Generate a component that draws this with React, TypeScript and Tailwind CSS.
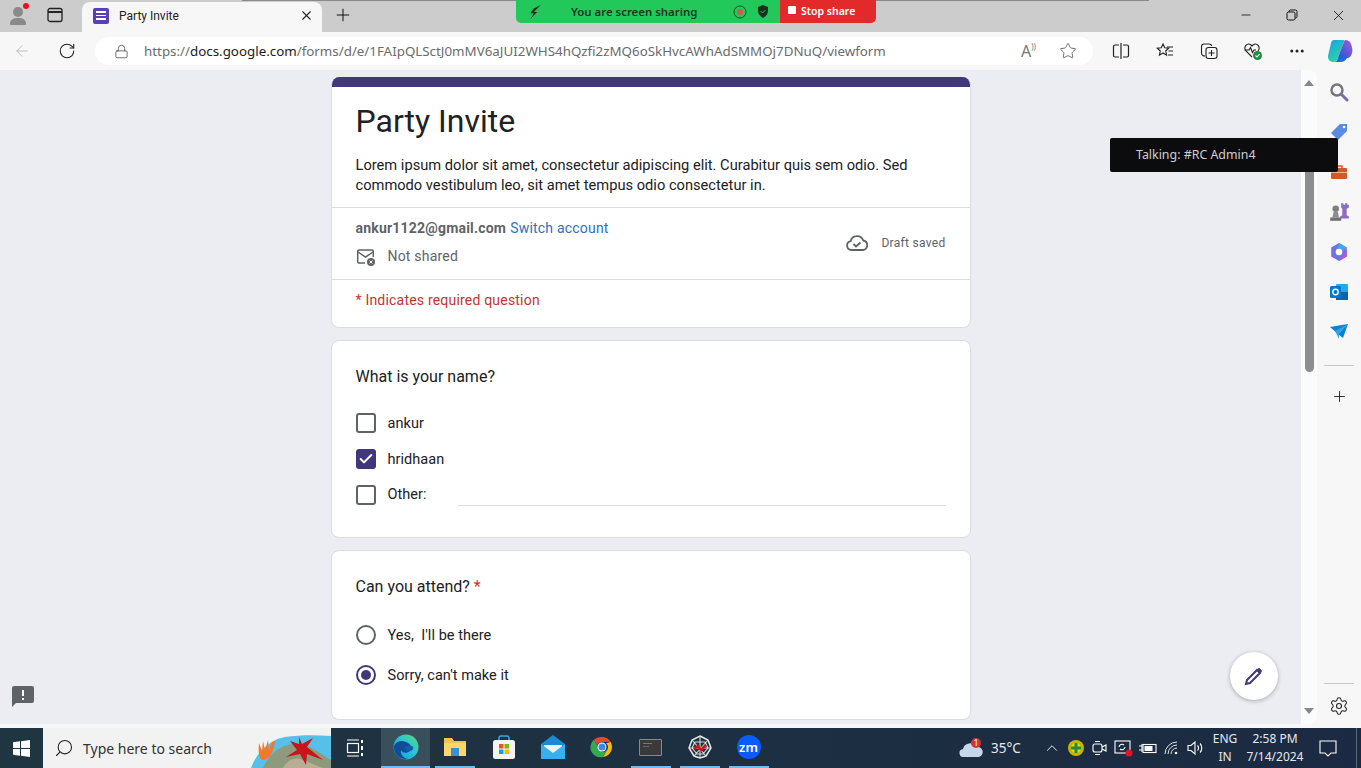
import React from "react";
import {
  ArrowLeft,
  Check,
  ChevronUp,
  Ellipsis,
  Lock,
  Minus,
  Plus,
  RotateCw,
  Search,
  Settings,
  Star,
  X,
} from "lucide-react";

const URL_PATH = "/forms/d/e/1FAIpQLSctJ0mMV6aJUI2WHS4hQzfi2zMQ6oSkHvcAWhAdSMMOj7DNuQ/viewform";

const Checkbox = ({ checked }: { checked?: boolean }) =>
  checked ? (
    <div className="w-[20px] h-[20px] rounded-[3px] bg-[#43377c] flex items-center justify-center">
      <Check size={16} strokeWidth={3} className="text-white" />
    </div>
  ) : (
    <div className="w-[20px] h-[20px] rounded-[3px] border-2 border-[#5f6368]" />
  );

const Radio = ({ checked }: { checked?: boolean }) => (
  <div
    className={`w-[20px] h-[20px] rounded-full border-2 flex items-center justify-center ${
      checked ? "border-[#43377c]" : "border-[#5f6368]"
    }`}
  >
    {checked && <div className="w-[10px] h-[10px] rounded-full bg-[#43377c]" />}
  </div>
);

const CheckRow = ({ label, checked }: { label: string; checked?: boolean }) => (
  <div className="h-[36px] flex items-center gap-[12px]">
    <Checkbox checked={checked} />
    <span className="pt-[1px] text-[14.5px] tracking-[0.05px] text-[#202124]">{label}</span>
  </div>
);

const RadioRow = ({ label, checked }: { label: string; checked?: boolean }) => (
  <div className="h-[40px] flex items-center gap-[12px]">
    <Radio checked={checked} />
    <span className="pt-[1px] text-[14.5px] tracking-[0.05px] text-[#202124] whitespace-pre">{label}</span>
  </div>
);

const SideCell = ({ children }: { children: React.ReactNode }) => (
  <div className="h-[40px] flex items-center justify-center">{children}</div>
);

const TaskItem = ({
  children,
  running,
  active,
}: {
  children: React.ReactNode;
  running?: boolean;
  active?: boolean;
}) => (
  <div className={`w-[49px] h-full flex flex-col items-center ${active ? "bg-[#39505c]" : ""}`}>
    <div className="flex-1 flex items-center justify-center">{children}</div>
    <div className={`h-[2px] ${active ? "w-full" : "w-[40px]"} ${running ? "bg-[#76b9ed]" : ""}`} />
  </div>
);

const TrayCell = ({ children }: { children: React.ReactNode }) => (
  <div className="w-[24px] flex items-center justify-center">{children}</div>
);

const TabStrip = () => (
  <div className="h-[32px] shrink-0 bg-[#cccccc] flex items-end">
    <div className="w-[36px] h-full flex items-center justify-center pl-[1px] pb-[2px]">
      <svg width="28" height="28" viewBox="0 0 28 28">
        <circle cx="13" cy="11" r="5" fill="#8a8a8a" />
        <path d="M5 23c0-5 4-6 8-6s8 1 8 6c0 1-1 1-2 1H7c-1 0-2 0-2-1z" fill="#8a8a8a" />
        <circle cx="21" cy="5" r="3" fill="#e81123" />
      </svg>
    </div>
    <div className="w-[38px] h-full flex items-center justify-center pb-[2px]">
      <svg width="16" height="16" viewBox="0 0 16 16" fill="none">
        <rect x="1" y="1.5" width="14" height="13" rx="2" stroke="#222" strokeWidth="1.3" />
        <path d="M1 5h14" stroke="#222" strokeWidth="2" />
      </svg>
    </div>
    <div className="ml-[8px] w-[240px] h-[30px] bg-[#f7f7f7] rounded-t-[8px] flex items-center pl-[11px] pb-[3px]">
      <div className="w-[16px] h-[16px] rounded-[2px] bg-[#5b3fb5] flex flex-col justify-center gap-[2px] pl-[3px]">
        <div className="w-[10px] h-[1.5px] bg-white" />
        <div className="w-[10px] h-[1.5px] bg-white" />
        <div className="w-[10px] h-[1.5px] bg-white" />
      </div>
      <span className="ml-[10px] text-[12px] text-[#222]">Party Invite</span>
      <X size={15} strokeWidth={1.7} className="ml-auto mr-[8px] text-[#222]" />
    </div>
    <div className="ml-[11px] h-full flex items-center pb-[2px]">
      <Plus size={20} strokeWidth={1.2} className="text-[#111]" />
    </div>
    <div className="ml-auto h-full flex items-center text-[#111] pb-[2px]">
      <div className="w-[46px] flex justify-center">
        <Minus size={14} strokeWidth={1.4} />
      </div>
      <div className="w-[46px] flex justify-center">
        <svg width="12" height="12" viewBox="0 0 12 12" fill="none" stroke="#111">
          <rect x="1" y="3" width="8" height="8" rx="1.5" />
          <path d="M3 3V2.5A1.5 1.5 0 0 1 4.500 1H9.500A1.500 1.500 0 0 1 11 2.500V7.500A1.500 1.500 0 0 1 9 9" />
        </svg>
      </div>
      <div className="w-[46px] flex justify-center">
        <X size={17} strokeWidth={1.2} />
      </div>
    </div>
  </div>
);

const Toolbar = () => (
  <div className="h-[38px] shrink-0 bg-[#f7f7f7] flex items-center">
    <div className="w-[44px] flex justify-center">
      <ArrowLeft size={18} strokeWidth={1.2} className="text-[#b8b8b8]" />
    </div>
    <div className="w-[46px] flex justify-center">
      <RotateCw size={18} strokeWidth={1.4} className="text-[#222]" />
    </div>
    <div className="ml-[5px] w-[998px] h-[28px] rounded-full bg-white flex items-center pl-[19px] pr-[16px] font-['Noto_Sans',sans-serif] text-[13.35px] text-[#6b6b6b]">
      <Lock size={15} strokeWidth={1.2} className="text-[#444] mr-[15px]" />
      <span>https://</span>
      <span className="text-[#1c1c1c]">docs.google.com</span>
      <span>{URL_PATH}</span>
      <span className="ml-auto text-[16px] leading-none text-[#777] mr-[23px]">
        A<span className="text-[8px] align-top">))</span>
      </span>
      <Star size={18} strokeWidth={1.1} className="text-[#555]" />
    </div>
    <div className="ml-[6px] w-[44px] flex justify-center">
      <svg width="18" height="18" viewBox="0 0 18 18" fill="none" stroke="#222" strokeWidth="1.2">
        <path d="M7 3H3a1.500 1.500 0 0 0-1.500 1.500v9A1.500 1.500 0 0 0 3 15h4M11 3h4a1.500 1.500 0 0 1 1.500 1.500v9A1.500 1.500 0 0 1 15 15h-4M9 1v16" />
      </svg>
    </div>
    <div className="w-[44px] flex justify-center">
      <svg width="18" height="18" viewBox="0 0 18 18" fill="none" stroke="#222" strokeWidth="1.1">
        <path d="M7 2l1.700 3.800 4 .4-3 2.800.9 4.200L7 11l-3.600 2.200.9-4.200-3-2.800 4-.4z" />
        <path d="M11 5h6M12.500 9H17M12 13h5" />
      </svg>
    </div>
    <div className="w-[44px] flex justify-center">
      <svg width="18" height="18" viewBox="0 0 18 18" fill="none" stroke="#222" strokeWidth="1.1">
        <path d="M5 14c-2 0-3.500-1-3.500-3V4.500C1.500 3 2.500 2 4 2h5c1.500 0 2.500.8 2.800 2" />
        <rect x="6" y="5.500" width="11" height="11" rx="2.500" />
        <path d="M11.500 8v6M8.500 11h6" />
      </svg>
    </div>
    <div className="w-[44px] flex justify-center">
      <svg width="20" height="20" viewBox="0 0 20 20" fill="none">
        <path d="M9 16L3 10C0 6 4 1 8 4l1 1 1-1c4-3 8 2 5 6" stroke="#222" strokeWidth="1.100" />
        <path d="M1.500 9H6l1.500-2.500 2 5L11 9h2" stroke="#222" strokeWidth="1.100" />
        <circle cx="14.500" cy="14.500" r="4.500" fill="#1e8e3e" />
        <path d="M12.500 14.500l1.500 1.500 2.500-2.800" stroke="#fff" strokeWidth="1.100" />
      </svg>
    </div>
    <div className="w-[44px] flex justify-center">
      <Ellipsis size={18} strokeWidth={2} className="text-[#222]" />
    </div>
    <div className="w-[42px] flex justify-center">
      <svg width="26" height="24" viewBox="0 0 26 24">
        <defs>
          <linearGradient id="cpA" x1="0" y1="0" x2="0.6" y2="1">
            <stop offset="0" stopColor="#1a9fe8" />
            <stop offset="1" stopColor="#2fd6a0" />
          </linearGradient>
          <linearGradient id="cpB" x1="0" y1="1" x2="1" y2="0">
            <stop offset="0" stopColor="#1a58d8" />
            <stop offset="1" stopColor="#a85ad8" />
          </linearGradient>
        </defs>
        <path d="M7 1h9c1 0 1.500.5 1 2l-4 10-2 6c-1 3-3 4-5 4-3 0-5.500-3-5-6L4 4c.5-2 1.500-3 3-3z" fill="url(#cpA)" />
        <path d="M18 1c3 0 5 1 6 4 1 3 2 6 1 9-1 4-3 5-5 5H11l2-6 4-10c.3-1 .5-2 1-2z" fill="url(#cpB)" />
        <path d="M11 19h9c-2 3-4 4-7 4H6c3 0 4-1 5-4z" fill="#1a6ae0" />
      </svg>
    </div>
  </div>
);

const HeaderCard = () => (
  <div className="bg-white rounded-lg border border-[#dadce0] border-t-0 overflow-hidden">
    <div className="h-[10px] bg-[#43377c]" />
    <div className="h-[121px] px-[24px] pt-[12px] border-b border-[#dadce0]">
      <h1 className="text-[32px] leading-[44px] text-[#202124]">Party Invite</h1>
      <p className="mt-[12px] text-[14.667px] leading-[20px] text-[#202124] w-[580px]">
        Lorem ipsum dolor sit amet, consectetur adipiscing elit. Curabitur quis sem odio. Sed commodo vestibulum leo,
        sit amet tempus odio consectetur in.
      </p>
    </div>
    <div className="h-[72px] px-[24px] flex items-start justify-between border-b border-[#dadce0]">
      <div>
        <div className="mt-[10px] text-[14px] leading-[20px] tracking-[0.2px]">
          <span className="font-bold text-[#5f6368]">ankur1122@gmail.com</span>
          <span className="ml-[4px] text-[#2f6fc4]">Switch account</span>
        </div>
        <div className="mt-[8px] flex items-center gap-[12px]">
          <svg width="20" height="20" viewBox="0 0 20 20" fill="none" className="shrink-0">
            <path d="M9 16H3a1.300 1.300 0 0 1-1.300-1.300V4.300A1.300 1.300 0 0 1 3 3h13a1.300 1.300 0 0 1 1.300 1.300V10" stroke="#5f6368" strokeWidth="1.500" />
            <path d="M2 5l7.500 5L17 5" stroke="#5f6368" strokeWidth="1.500" />
            <circle cx="15" cy="15" r="4" fill="#5f6368" />
            <path d="M13.500 13.500l3 3M16.500 13.500l-3 3" stroke="#fff" />
          </svg>
          <span className="text-[14px] tracking-[0.2px] text-[#5f6368]">Not shared</span>
        </div>
      </div>
      <div className="mt-[23px] flex items-center gap-[12px]">
        <svg width="24" height="24" viewBox="0 0 24 24" fill="none" stroke="#5f6368" strokeWidth="1.800">
          <path d="M6.500 19a4.500 4.500 0 0 1-.8-8.900A6.500 6.500 0 0 1 18.200 9.500 4.800 4.800 0 0 1 18 19z" />
          <path d="M8.500 13l2.500 2.500 4.500-4" />
        </svg>
        <span className="text-[12px] tracking-[0.3px] text-[#5f6368]">Draft saved</span>
      </div>
    </div>
    <div className="h-[47px] px-[24px] pt-[10px] text-[14px] tracking-[0.2px] text-[#c5342c]">* Indicates required question</div>
  </div>
);

const NameCard = () => (
  <div className="mt-[12px] h-[198px] bg-white rounded-lg border border-[#dadce0] px-[24px] pt-[25px]">
    <div className="h-[22px] text-[16px] leading-[22px] text-[#202124]">What is your name?</div>
    <div className="mt-[17px]">
      <CheckRow label="ankur" />
      <CheckRow label="hridhaan" checked />
      <div className="h-[36px] flex items-center">
        <Checkbox />
        <span className="ml-[12px] text-[14.5px] tracking-[0.05px] text-[#202124]">Other:</span>
        <div className="ml-[31px] flex-1 h-[22px] border-b border-[#dadce0]" />
      </div>
    </div>
  </div>
);

const AttendCard = () => (
  <div className="mt-[12px] h-[170px] bg-white rounded-lg border border-[#dadce0] px-[24px] pt-[25px] shrink-0">
    <div className="h-[22px] text-[16px] leading-[22px] text-[#202124]">
      Can you attend? <span className="text-[#d93025]">*</span>
    </div>
    <div className="mt-[17px]">
      <RadioRow label="Yes,  I'll be there" />
      <RadioRow label="Sorry, can't make it" checked />
    </div>
  </div>
);

const Sidebar = () => (
  <div className="w-[44px] shrink-0 bg-[#f7f7f7] flex flex-col pt-[2px]">
    <SideCell>
      <svg width="20" height="20" viewBox="0 0 20 20" fill="none">
        <circle cx="8" cy="8" r="5.500" stroke="#74747a" strokeWidth="2.400" />
        <path d="M12.500 12.500L18 18" stroke="#7c6bb0" strokeWidth="3" strokeLinecap="round" />
      </svg>
    </SideCell>
    <SideCell>
      <svg width="20" height="20" viewBox="0 0 20 20">
        <path d="M11 2h7v7l-9 9-7-7z" fill="#5a8be0" />
        <circle cx="15" cy="5" r="1.300" fill="#fff" />
      </svg>
    </SideCell>
    <SideCell>
      <svg width="18" height="18" viewBox="0 0 18 18">
        <rect x="1" y="5" width="16" height="11" rx="1" fill="#d8552b" />
        <path d="M6 5V3h6v2" fill="none" stroke="#d8552b" strokeWidth="1.500" />
        <rect x="1" y="9" width="16" height="1" fill="#f2b79e" />
      </svg>
    </SideCell>
    <SideCell>
      <svg width="22" height="22" viewBox="0 0 20 20">
        <circle cx="7" cy="7" r="3" fill="#7f7f7f" />
        <path d="M5 10h4l1 5H4z" fill="#8d8d8d" />
        <rect x="2" y="15" width="10" height="3" fill="#6f6f6f" />
        <path d="M12 2h2v1.500h1.500V2h2v1.500H19V6l-2 1v6l2 1v2h-8v-2l2-1V7l-1-1z" fill="#8b6fbe" />
      </svg>
    </SideCell>
    <SideCell>
      <svg width="20" height="20" viewBox="0 0 18 18">
        <path d="M9 1l7 4v8l-7 4-7-4V5z" fill="#6f72e0" />
        <path d="M9 1l7 4-3 3c-2-2-5-2-6 0z" fill="#4aa3e8" />
        <path d="M16 7v6l-7 4 2-4c2 0 3-2 3-4z" fill="#b05ad8" />
        <circle cx="9" cy="9" r="3" fill="#fff" />
      </svg>
    </SideCell>
    <SideCell>
      <svg width="18" height="18" viewBox="0 0 18 18">
        <rect x="6" y="1" width="12" height="15" rx="1" fill="#28a8ea" />
        <rect x="6" y="9" width="12" height="8" fill="#0a64ad" />
        <rect x="0" y="3" width="11" height="12" rx="1.500" fill="#0078d4" />
        <circle cx="5.500" cy="9" r="2.700" fill="none" stroke="#fff" strokeWidth="1.400" />
      </svg>
    </SideCell>
    <SideCell>
      <svg width="18" height="16" viewBox="0 0 18 16">
        <path d="M0 3l18-3-5 14-5-4z" fill="#0f7fd1" />
        <path d="M5 7l13-7-9 10 0 5z" fill="#28a8ea" />
      </svg>
    </SideCell>
    <div className="mt-[13px] mx-[7px] h-px bg-[#c8c8c8]" />
    <div className="mt-[10px]">
      <SideCell>
        <Plus size={17} strokeWidth={1.200} className="text-[#111]" />
      </SideCell>
    </div>
    <div className="mt-auto mx-[7px] h-px bg-[#c8c8c8]" />
    <div className="h-[44px] flex items-center justify-center">
      <Settings size={20} strokeWidth={1.300} className="text-[#222]" />
    </div>
  </div>
);

const Scrollbar = () => (
  <div className="w-[16px] shrink-0 bg-[#fbfbfb] rounded-tr-[8px] rounded-br-[8px] flex flex-col items-center">
    <div className="mt-[10px] w-0 h-0 border-x-[5px] border-x-transparent border-b-[6px] border-b-[#888]" />
    <div className="mt-[60px] w-[9px] h-[226px] rounded-b-full bg-[#8d8d8d]" />
    <div className="mt-auto mb-[10px] w-0 h-0 border-x-[5px] border-x-transparent border-t-[6px] border-t-[#888]" />
  </div>
);

const Taskbar = () => (
  <div className="h-[40px] shrink-0 bg-gradient-to-r from-[#1f3541] to-[#1b2a42] flex items-stretch font-['Noto_Sans',sans-serif] text-white">
    <div className="w-[43px] flex items-center justify-center">
      <svg width="17" height="17" viewBox="0 0 17 17" fill="#fff">
        <path d="M0 2.300l7-1v6.700H0zM8 1.200l9-1.200v8H8zM0 9h7v6.700l-7-1zM8 9h9v8l-9-1.200z" />
      </svg>
    </div>
    <div className="w-[288px] bg-[#f2f2f2] flex items-center overflow-hidden">
      <Search size={20} strokeWidth={1.300} className="ml-[11px] text-[#222] -scale-x-100" />
      <span className="ml-[9px] text-[14px] text-[#333]">Type here to search</span>
      <svg width="82" height="40" viewBox="0 0 82 40" className="ml-auto shrink-0">
        <path d="M2 40C8 24 20 12 36 9c14-2 30-2 46-1v32z" fill="#57c0e8" />
        <path d="M14 40c6-14 18-24 32-24 16 0 28 12 36 16v8z" fill="#8d9a7c" />
        <path d="M34 40c4-8 12-12 20-8 8 3 14 6 20 8z" fill="#b9ad94" />
        <path d="M10 15l3 8 1-10 2 9 3-10 1 10 3-8 3-1c-1 9-5 19-12 19-4 0-5-8-4-17z" fill="#f07a2a" />
        <path d="M50 9l3 7 11-6-6 9 16 13-16-6-1 11-6-11-14 3 11-7-7-9 9 3z" fill="#c8141a" />
      </svg>
    </div>
    <div className="w-[47px] flex items-center justify-center">
      <svg width="18" height="18" viewBox="0 0 18 18" fill="none" stroke="#fff" strokeWidth="1.200">
        <path d="M1 1h12M1 17h12" />
        <rect x="1.500" y="4.500" width="11" height="9" />
        <path d="M16 1v3M16 7v4M16 14v3" strokeWidth="2" />
      </svg>
    </div>
    <div className="ml-[3px] flex items-stretch">
      <TaskItem active running>
        <svg width="26" height="26" viewBox="0 0 26 26">
          <defs>
            <linearGradient id="edgeA" x1="0" y1="1" x2="1" y2="0">
              <stop offset="0" stopColor="#1b8fe0" />
              <stop offset="0.55" stopColor="#2bc3d8" />
              <stop offset="1" stopColor="#5fdc6a" />
            </linearGradient>
          </defs>
          <circle cx="13" cy="13" r="12.500" fill="url(#edgeA)" />
          <path d="M1 12c2-5 8-6 12-4 5 2 7 6 4 9-3 3-8 2-9-1-1 4 2 8 7 9-8 1-15-5-14-13z" fill="#0c4f96" />
          <path d="M12 14c1-3 6-3 8-1 1 2-1 4-4 4-2 0-4-1-4-3z" fill="#0f5fae" />
        </svg>
      </TaskItem>
      <TaskItem running>
        <svg width="24" height="22" viewBox="0 0 24 22">
          <path d="M1 2h8l2 3h12v15H1z" fill="#f4c542" />
          <rect x="1" y="7" width="22" height="13" fill="#fbd66b" />
          <rect x="8" y="12" width="8" height="8" fill="#3a8fd8" />
        </svg>
      </TaskItem>
      <TaskItem>
        <svg width="24" height="26" viewBox="0 0 24 26">
          <path d="M7 7V4a2 2 0 0 1 2-2h6a2 2 0 0 1 2 2v3" fill="none" stroke="#35a8e0" strokeWidth="1.500" />
          <rect x="1" y="6" width="22" height="19" rx="2.500" fill="#f4f4f4" />
          <rect x="7" y="10" width="4.500" height="4.500" fill="#f25022" />
          <rect x="12.500" y="10" width="4.500" height="4.500" fill="#7fba00" />
          <rect x="7" y="15.500" width="4.500" height="4.500" fill="#00a4ef" />
          <rect x="12.500" y="15.500" width="4.500" height="4.500" fill="#ffb900" />
        </svg>
      </TaskItem>
      <TaskItem>
        <svg width="26" height="24" viewBox="0 0 26 24">
          <path d="M1 9L13 0l12 9v15H1z" fill="#1b8ad6" />
          <path d="M4 10h18v6l-9 5-9-5z" fill="#e8f4fc" />
          <path d="M1 9l12 9 12-9v15H1z" fill="#35b0f0" />
        </svg>
      </TaskItem>
      <TaskItem>
        <svg width="24" height="24" viewBox="0 0 48 48">
          <path d="M24 4a20 20 0 0 1 17.300 10H24a10 10 0 0 0-9.600 7.200L7.700 9.600A20 20 0 0 1 24 4z" fill="#ea4335" />
          <path d="M41.300 14A20 20 0 0 1 26 44l8.600-15A10 10 0 0 0 32 16.500z" fill="#fbbc05" />
          <path d="M26 44A20 20 0 0 1 7.700 9.600l8.600 15A10 10 0 0 0 34.600 29z" fill="#34a853" />
          <circle cx="24" cy="24" r="9" fill="#fff" />
          <circle cx="24" cy="24" r="7" fill="#4285f4" />
        </svg>
      </TaskItem>
      <TaskItem running>
        <div className="w-[23px] h-[17px] bg-[#3a3a3a] border border-[#8a8a8a] rounded-[1px] p-[3px]">
          <div className="w-[9px] h-[1px] bg-[#777]" />
          <div className="mt-[2px] w-[6px] h-[1px] bg-[#666]" />
        </div>
      </TaskItem>
      <TaskItem running>
        <svg width="24" height="24" viewBox="0 0 24 24" fill="none">
          <path d="M12 1L20 5l3 8-5 8-6 2-6-2-5-8 3-8z" fill="#1f3541" stroke="#e8e8e8" strokeWidth="1.500" />
          <path d="M12 1v22M4 5l14 16M20 5L6 21M1 13h22M7 7h10l3 6-5 6H9l-5-6z" stroke="#d8d8d8" strokeWidth="1.100" />
          <path d="M6 14l4-3 3 4 5-5" stroke="#d0121c" strokeWidth="2.500" />
        </svg>
      </TaskItem>
      <TaskItem running>
        <div className="w-[24px] h-[24px] rounded-full bg-[#0b5cff] flex items-center justify-center text-[13px] font-semibold leading-none">
          zm
        </div>
      </TaskItem>
    </div>
    <div className="flex-1" />
    <div className="w-[83px] flex items-center pl-[2px]">
      <svg width="24" height="22" viewBox="0 0 24 22" className="shrink-0">
        <path d="M5 20a4 4 0 0 1-1-8 7 7 0 0 1 13-2 5 5 0 0 1 3 10z" fill="#c7d7ea" />
        <circle cx="17" cy="6" r="5" fill="#d13438" />
        <text x="17" y="9" textAnchor="middle" fontSize="8" fill="#fff">1</text>
      </svg>
      <span className="ml-[8px] text-[13.5px] text-[#e6e9ec]">35°C</span>
    </div>
    <div className="flex items-stretch">
      <TrayCell>
        <ChevronUp size={18} strokeWidth={1.200} />
      </TrayCell>
      <TrayCell>
        <svg width="16" height="16" viewBox="0 0 16 16">
          <circle cx="8" cy="8" r="8" fill="#c9b400" />
          <circle cx="8" cy="8" r="5" fill="#e8d21d" />
          <path d="M6.500 3h3v3.500H13v3H9.500V13h-3V9.500H3v-3h3.500z" fill="#1e8e3e" />
        </svg>
      </TrayCell>
      <TrayCell>
        <svg width="16" height="18" viewBox="0 0 16 18" fill="none" stroke="#fff" strokeWidth="1.100">
          <rect x="1" y="5" width="9" height="8" rx="2" />
          <path d="M10 8l4-2v6l-4-2M3 2.500h5M3 15.500h5" />
        </svg>
      </TrayCell>
      <TrayCell>
        <svg width="20" height="20" viewBox="0 0 20 20" fill="none" stroke="#fff" strokeWidth="1.100">
          <rect x="1" y="3" width="15" height="12" />
          <path d="M5 9a3 3 0 0 1 5-2M11 9a3 3 0 0 1-5 2" />
          <circle cx="15" cy="15" r="3.500" fill="#e81123" stroke="none" />
        </svg>
      </TrayCell>
      <TrayCell>
        <svg width="18" height="12" viewBox="0 0 18 12" fill="none" stroke="#fff" strokeWidth="1.100">
          <rect x="4" y="2.500" width="13" height="8" />
          <rect x="5.500" y="4" width="8" height="5" fill="#fff" stroke="none" />
          <path d="M0 4h3M0 8h3M3 2v8" />
        </svg>
      </TrayCell>
      <TrayCell>
        <svg width="16" height="14" viewBox="0 0 16 14" fill="none" stroke="#dfe3e6" strokeWidth="1">
          <path d="M1 13A12 12 0 0 1 13 1M4 13a9 9 0 0 1 9-9M7 13a6 6 0 0 1 6-6" />
          <circle cx="12" cy="12" r="1.300" fill="#fff" stroke="none" />
        </svg>
      </TrayCell>
      <TrayCell>
        <svg width="18" height="16" viewBox="0 0 18 16" fill="none" stroke="#fff" strokeWidth="1.100">
          <path d="M1 5.500h3L8 2v12l-4-3.500H1z" />
          <path d="M10.500 5.500a3.500 3.500 0 0 1 0 5M13 3.500a6.500 6.500 0 0 1 0 9" />
        </svg>
      </TrayCell>
    </div>
    <div className="ml-[2px] w-[30px] flex flex-col items-center justify-center text-[12px] leading-[18px] text-[#e6e9ec]">
      <span>ENG</span>
      <span>IN</span>
    </div>
    <div className="ml-[5px] w-[60px] flex flex-col items-center justify-center text-[12px] leading-[18px] text-[#e6e9ec] whitespace-nowrap">
      <span>2:58 PM</span>
      <span>7/14/2024</span>
    </div>
    <div className="w-[46px] flex items-center justify-center">
      <svg width="18" height="17" viewBox="0 0 18 17" fill="none" stroke="#fff" strokeWidth="1.100">
        <path d="M1 1h16v12h-5l-3 3-3-3H1z" />
      </svg>
    </div>
    <div className="ml-[5px] w-[5px] border-l border-[#5b6b75]" />
  </div>
);

export default function App() {
  return (
    <div className="relative w-[1361px] h-[768px] overflow-hidden flex flex-col bg-[#f7f7f7] font-['Roboto',sans-serif]">
      <TabStrip />
      <Toolbar />
      <div className="flex-1 min-h-0 flex">
        <div className="flex-1 min-w-0 flex pb-[4px]">
          <div className="flex-1 min-w-0 bg-[#ecedf2] pt-[7px] overflow-hidden">
            <div className="w-[640px] mx-auto">
              <HeaderCard />
              <NameCard />
              <AttendCard />
            </div>
          </div>
          <Scrollbar />
        </div>
        <Sidebar />
      </div>
      <Taskbar />

      {/* window top line, sits over the tab strip */}
      <div className="absolute left-[242px] top-0 w-[907px] h-px bg-[#8a8a8a]" />

      {/* zoom share bar */}
      <div className="absolute left-[516px] top-0 w-[360px] h-[23px] flex font-['Noto_Sans',sans-serif] text-[11.4px] font-semibold">
        <div className="w-[264px] bg-[#22c95a] rounded-bl-[5px] flex items-center text-[#123a22]">
          <svg width="14" height="14" viewBox="0 0 12 12" className="ml-[12px]" fill="#17351f">
            <path d="M11 0L5 3 2 7h3l-3 5 6-6H5z" />
          </svg>
          <span className="ml-[29px]">You are screen sharing</span>
          <svg width="14" height="14" viewBox="0 0 14 14" className="ml-[36px]" fill="none">
            <circle cx="7" cy="7" r="6" stroke="#14532d" />
            <circle cx="7" cy="7" r="3" fill="#d9534f" />
          </svg>
          <svg width="12" height="13" viewBox="0 0 12 13" className="ml-[10px]">
            <path d="M6 0l5 2v4c0 3-2 5-5 7-3-2-5-4-5-7V2z" fill="#14331f" />
            <path d="M3.500 6l2 2 3-3" stroke="#22c95a" fill="none" />
          </svg>
        </div>
        <div className="w-[96px] bg-[#e32a2a] rounded-br-[5px] flex items-center text-white">
          <div className="ml-[8px] -mt-[4px] w-[8px] h-[8px] bg-white rounded-[1px]" />
          <span className="ml-[5px] text-[10.5px]">Stop share</span>
        </div>
      </div>

      {/* zoom talking tooltip */}
      <div className="absolute left-[1110px] top-[138px] w-[228px] h-[34px] bg-[#0c0c0e] rounded-[2px] flex items-center pl-[26px] font-['Noto_Sans',sans-serif] text-[12.4px] text-[#cfcfcf]">
        Talking: #RC Admin4
      </div>

      {/* floating edit button */}
      <div className="absolute left-[1230px] top-[652px] w-[48px] h-[48px] rounded-full bg-white shadow-[0_1px_4px_rgba(0,0,0,0.3)] flex items-center justify-center">
        <svg width="20" height="20" viewBox="0 0 20 20" fill="none">
          <path d="M2 18l1-4L13 4l3 3L6 17z" stroke="#43377c" strokeWidth="2" />
          <path d="M14 2.500a1.500 1.500 0 0 1 2 0l1.500 1.500a1.500 1.500 0 0 1 0 2L16 7.500 12.500 4z" fill="#43377c" />
        </svg>
      </div>

      {/* feedback icon */}
      <svg width="22" height="21" viewBox="0 0 22 21" className="absolute left-[12px] top-[686px]">
        <path d="M2 0h18a2 2 0 0 1 2 2v13a2 2 0 0 1-2 2H4l-4 4V2a2 2 0 0 1 2-2z" fill="#5f6368" />
        <rect x="10" y="4" width="2" height="6" fill="#fff" />
        <rect x="10" y="12" width="2" height="2" fill="#fff" />
      </svg>
    </div>
  );
}
